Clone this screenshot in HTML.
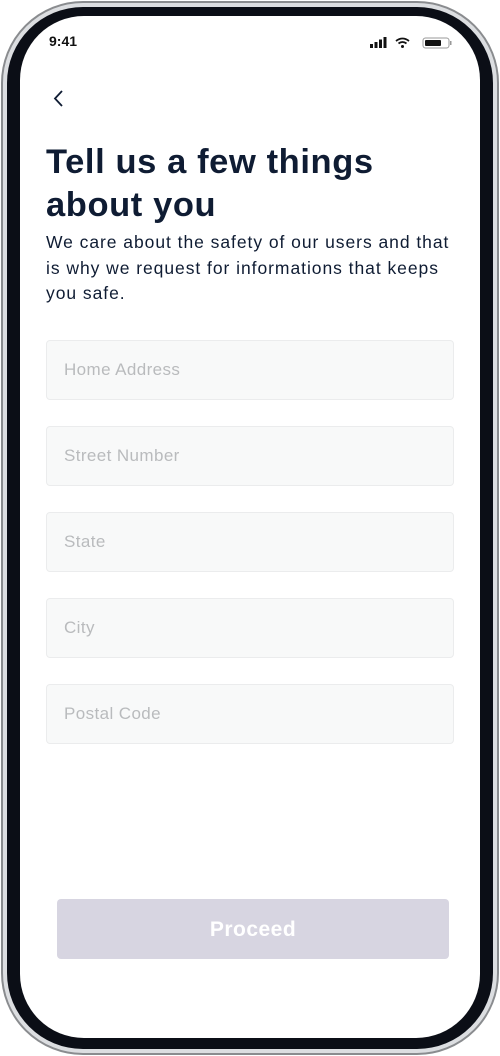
<!DOCTYPE html>
<html><head><style>
*{margin:0;padding:0;box-sizing:border-box}
body{width:500px;height:1056px;background:#fff;font-family:"Liberation Sans",sans-serif;position:relative;overflow:hidden}
.outer{position:absolute;left:1px;top:1px;width:498px;height:1054px;border-radius:82px;background:#dcdee1;border:2px solid #8a8c8f}
.black{position:absolute;left:7px;top:7px;width:486px;height:1042px;border-radius:76px;background:#0b0e16}
.screen{position:absolute;left:20px;top:16px;width:460px;height:1022px;border-radius:64px;background:#fff;overflow:hidden}
.time{position:absolute;left:29px;top:17px;font-size:14px;font-weight:bold;color:#111}
.title{position:absolute;left:26px;top:125px;font-size:34.5px;font-weight:bold;color:#0f1c33;line-height:43px;letter-spacing:0.6px;white-space:nowrap}
.sub{position:absolute;left:26px;top:214px;font-size:17.5px;color:#0f1c33;line-height:25.5px;width:410px;letter-spacing:0.95px}
.inp{position:absolute;left:26px;width:408px;height:60px;border:1px solid #ebeced;background:#f8f9f9;border-radius:4px;color:#b9bbbd;font-size:17px;padding-left:17px;line-height:58px;letter-spacing:0.4px}
.btn{position:absolute;left:37px;top:883px;width:392px;height:60px;background:#d7d5e1;border-radius:4px;color:#fff;font-size:21px;font-weight:bold;text-align:center;line-height:62px;letter-spacing:0.5px}
</style></head><body>
<div class="outer"></div><div class="black"></div>
<div class="screen">
<div class="time">9:41</div>
<svg style="position:absolute;left:350px;top:20px" width="86" height="14" viewBox="0 0 86 14">
<rect x="0" y="8" width="3" height="4" fill="#111"/><rect x="4.5" y="6" width="3" height="6" fill="#111"/><rect x="9" y="3.5" width="3" height="8.5" fill="#111"/><rect x="13.5" y="1" width="3" height="11" fill="#111"/>
<path d="M26 5 Q32.5 0 39 5" stroke="#111" stroke-width="1.8" fill="none"/><path d="M28.5 7.5 Q32.5 4.5 36.5 7.5" stroke="#111" stroke-width="1.8" fill="none"/><circle cx="32.5" cy="10.5" r="1.5" fill="#111"/>
<rect x="53" y="2" width="26" height="10" rx="2.5" fill="none" stroke="#999" stroke-width="1"/><rect x="55" y="4" width="16" height="6" rx="1" fill="#111"/><rect x="80" y="5" width="1.5" height="4" fill="#999"/>
</svg>
<svg style="position:absolute;left:32px;top:73px" width="14" height="20" viewBox="0 0 14 20"><path d="M10 2 L3 9.5 L10 17" stroke="#0f1c33" stroke-width="1.8" fill="none"/></svg>
<div class="title">Tell us a few things<br>about you</div>
<div class="sub">We care about the safety of our users and that is why we request for informations that keeps you safe.</div>
<div class="inp" style="top:324px">Home Address</div>
<div class="inp" style="top:410px">Street Number</div>
<div class="inp" style="top:496px">State</div>
<div class="inp" style="top:582px">City</div>
<div class="inp" style="top:668px">Postal Code</div>
<div class="btn">Proceed</div>
</div>
</body></html>
